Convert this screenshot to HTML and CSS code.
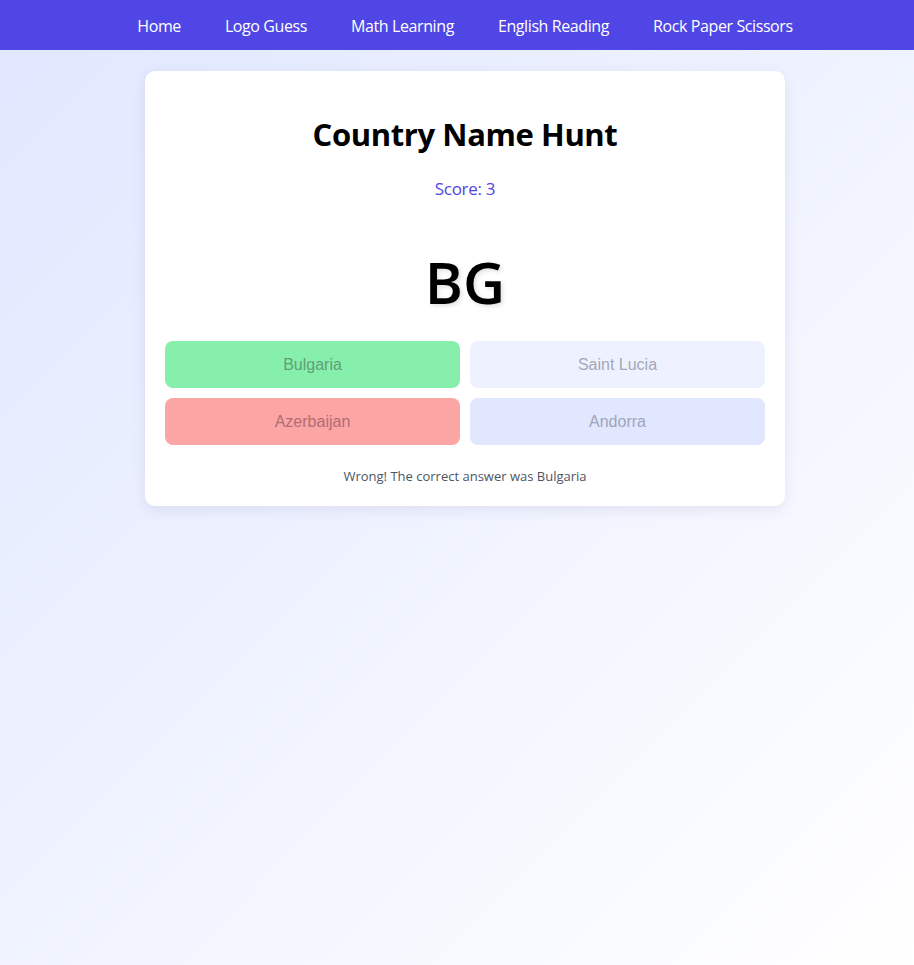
FILE: index.html
```html
<!DOCTYPE html>
<html lang="en">
<head>
<meta charset="utf-8">
<title>Country Name Hunt</title>
<link rel="stylesheet" href="styles.css">
</head>
<body>
<nav class="nav">
  <a class="nav-link" href="#">Home</a>
  <a class="nav-link" href="#">Logo Guess</a>
  <a class="nav-link" href="#">Math Learning</a>
  <a class="nav-link" href="#">English Reading</a>
  <a class="nav-link" href="#">Rock Paper Scissors</a>
</nav>
<main class="main">
  <section class="card">
    <h1 class="title">Country Name Hunt</h1>
    <p class="score">Score: 3</p>
    <div class="code">BG</div>
    <div class="options">
      <button class="opt opt-correct" disabled>Bulgaria</button>
      <button class="opt opt-plain" disabled>Saint Lucia</button>
      <button class="opt opt-wrong" disabled>Azerbaijan</button>
      <button class="opt opt-hover" disabled>Andorra</button>
    </div>
    <p class="feedback">Wrong! The correct answer was Bulgaria</p>
  </section>
</main>
</body>
</html>
```

FILE: styles.css
```css
html, body {
  margin: 0;
  padding: 0;
}
body {
  min-height: 965px;
  font-family: "Open Sans", "Noto Sans", sans-serif;
  background: linear-gradient(135deg, #e0e7ff 0%, #ffffff 100%);
  color: #000;
}
.nav {
  height: 50px;
  box-sizing: border-box;
  padding: 2px 0 0 16px;
  background: #4f46e5;
  display: flex;
  justify-content: center;
  align-items: center;
  gap: 44px;
}
.nav-link {
  color: #fff;
  text-decoration: none;
  font-size: 16px;
  letter-spacing: -0.4px;
}
.main {
  padding: 21px 0 0 16px;
  display: flex;
  justify-content: center;
}
.card {
  width: 640px;
  box-sizing: border-box;
  background: #fff;
  border-radius: 10px;
  padding: 20px;
  box-shadow: 0 4px 14px rgba(60, 60, 120, 0.10);
  text-align: center;
}
.title {
  margin: 25px 0 0;
  font-size: 31px;
  line-height: 36px;
  font-weight: 700;
  letter-spacing: -0.4px;
}
.score {
  margin: 23px 0 0;
  font-size: 17px;
  line-height: 28px;
  color: #4f46e5;
  letter-spacing: -0.3px;
}
.code {
  margin-top: 49px;
  font-size: 58px;
  line-height: 60px;
  font-weight: 600;
  text-shadow: 2px 2px 4px rgba(0, 0, 0, 0.12);
}
.options {
  margin-top: 29px;
  display: grid;
  grid-template-columns: 1fr 1fr;
  gap: 10px;
}
.opt {
  height: 47px;
  border: none;
  border-radius: 8px;
  font-family: "Liberation Sans", Arial, sans-serif;
  font-size: 16px;
  color: #9ca3af;
}
.opt-correct {
  background: #86efac;
  color: #5fa076;
}
.opt-wrong {
  background: #fca5a5;
  color: #b06d72;
}
.opt-plain {
  background: #eef2ff;
  color: #a5a8b8;
}
.opt-hover {
  background: #e0e7ff;
  color: #a0a4b8;
}
.feedback {
  margin: 21px 0 0;
  font-size: 13px;
  line-height: 20px;
  color: #4b5563;
}
```
